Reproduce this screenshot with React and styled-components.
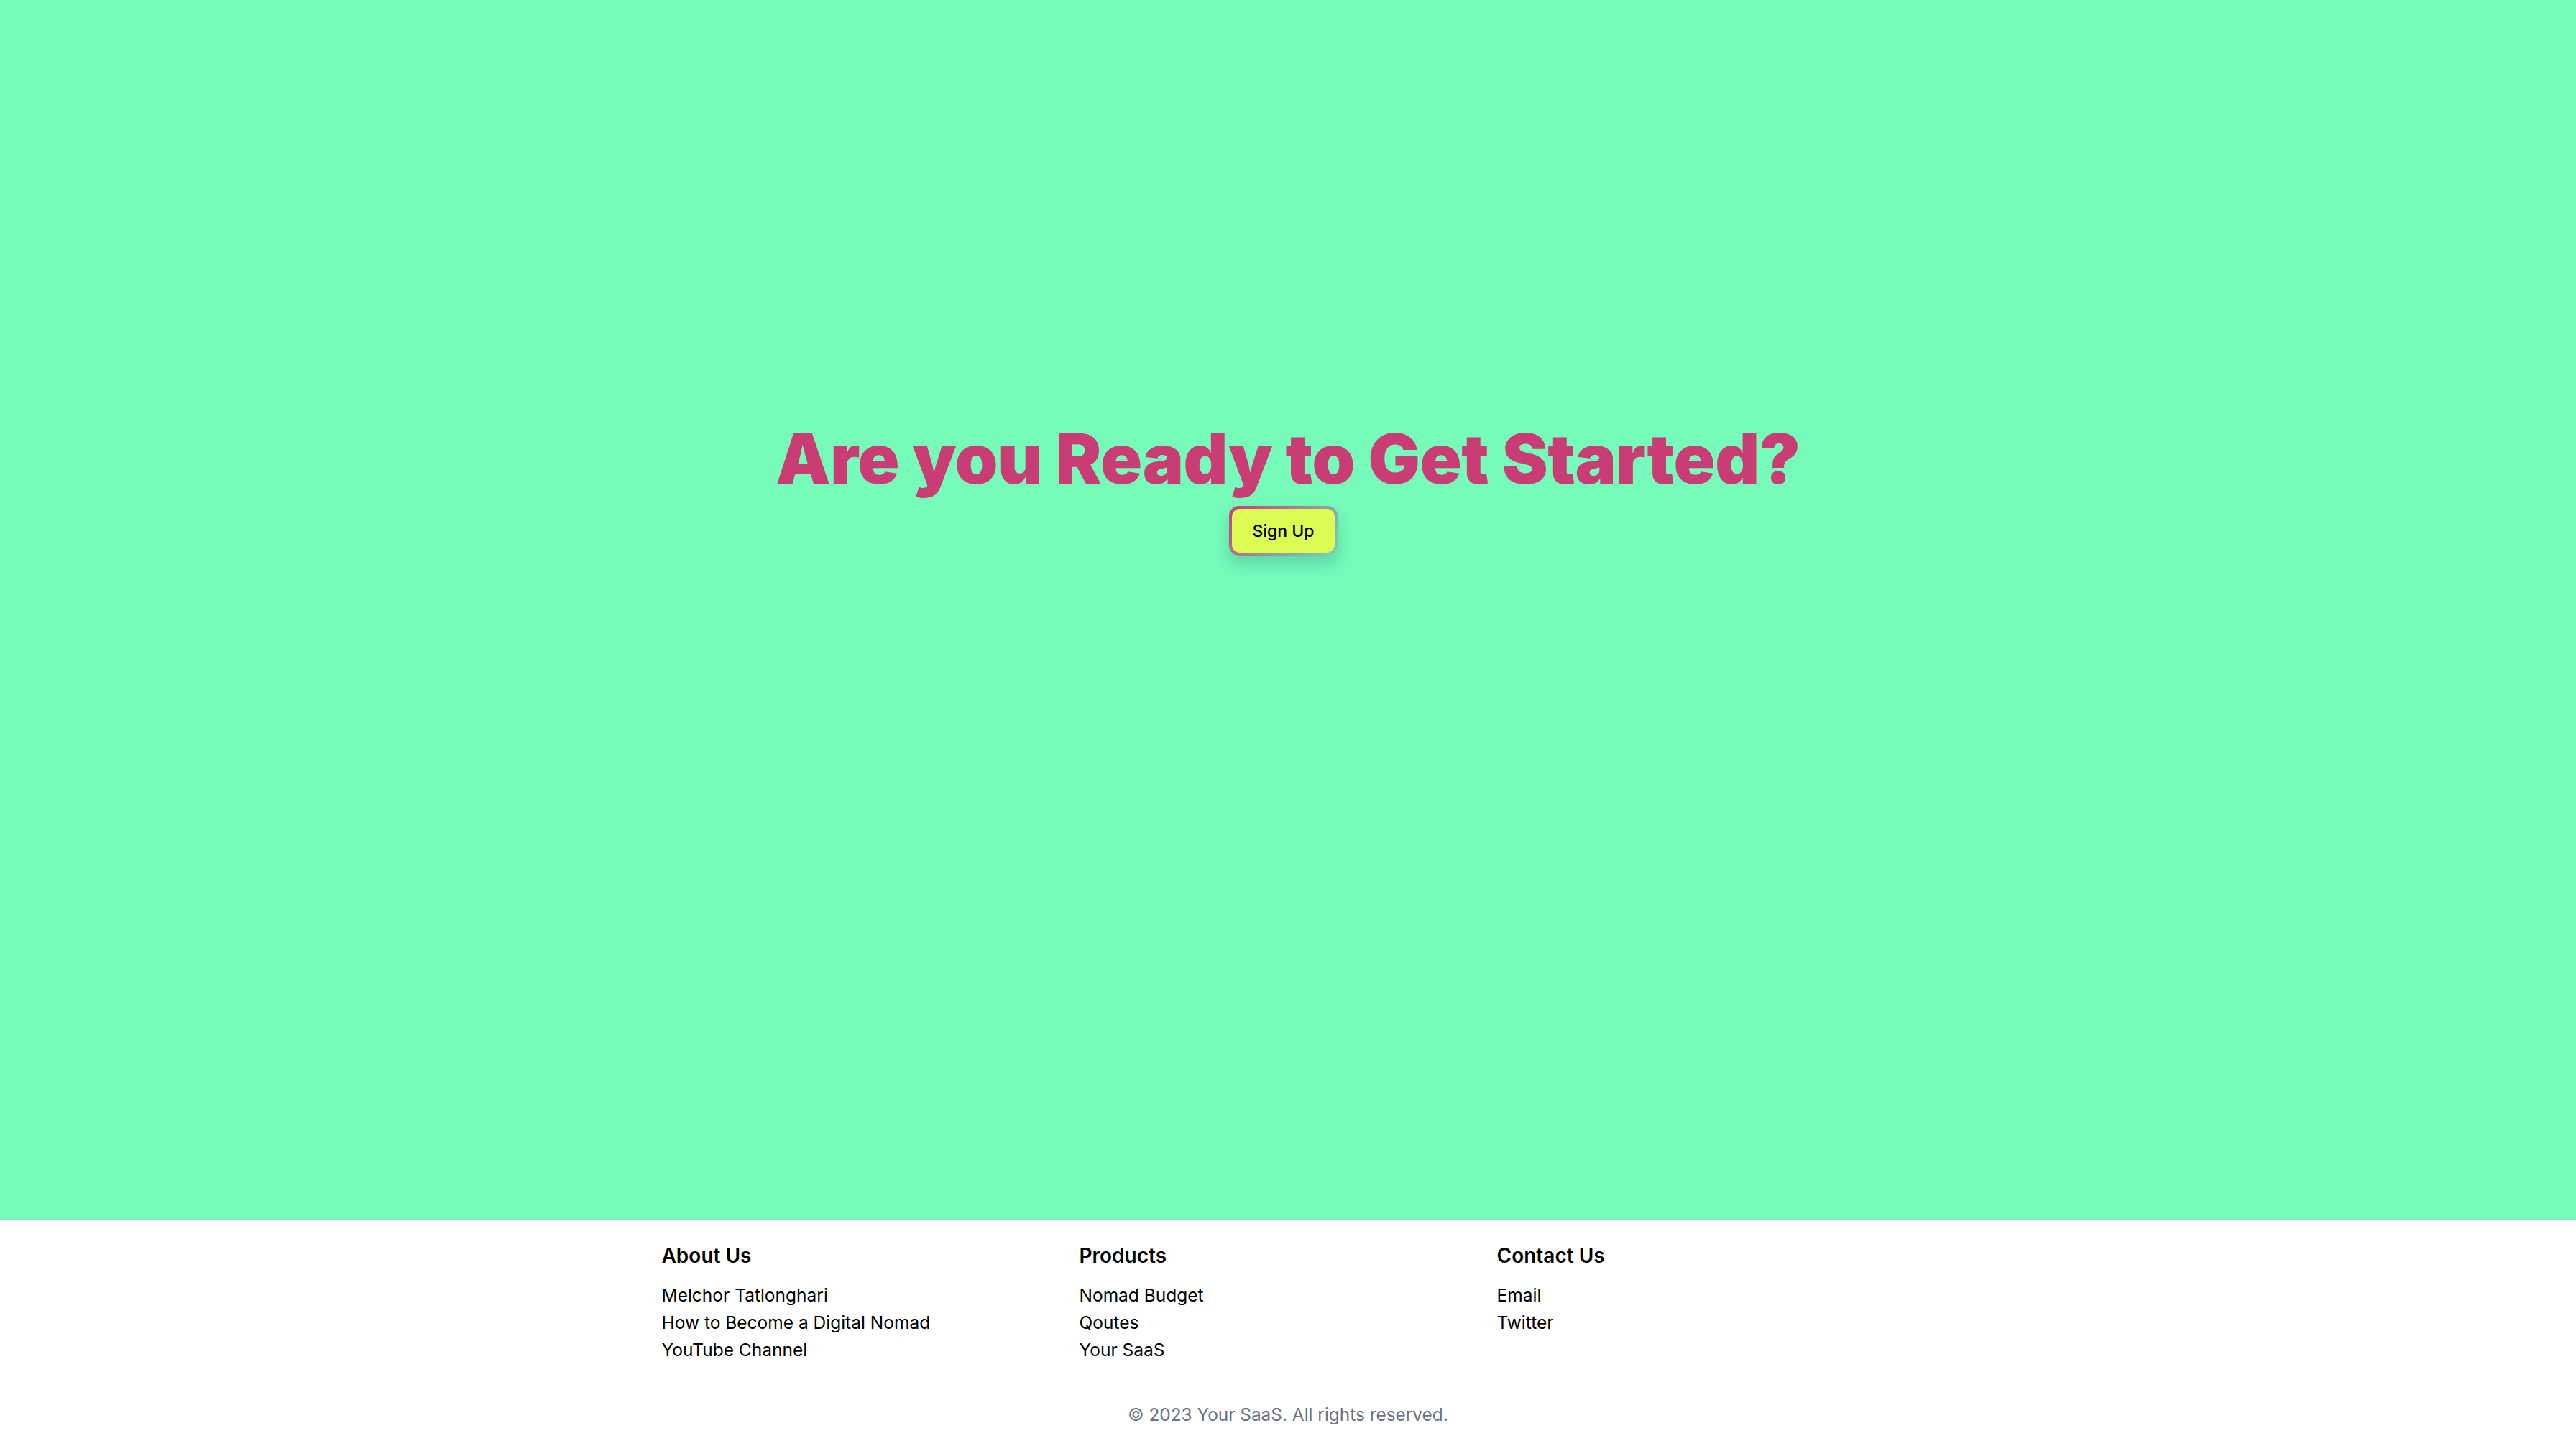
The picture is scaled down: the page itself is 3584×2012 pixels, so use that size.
import styled, { createGlobalStyle } from 'styled-components';

const GlobalStyle = createGlobalStyle`
  html, body {
    margin: 0;
    padding: 0;
  }
  body {
    font-family: Inter, "Liberation Sans", sans-serif;
    color: #000;
  }
  * { box-sizing: border-box; }
`;

const Page = styled.div`
  display: flex;
  flex-direction: column;
  min-height: 2012px;
`;

const Hero = styled.section`
  height: 1697px;
  background: #76fbbb;
  display: flex;
  flex-direction: column;
  align-items: center;
  padding-top: 590px;
`;

const Title = styled.h1`
  margin: 0;
  font-size: 96px;
  line-height: 96px;
  font-weight: 900;
  letter-spacing: -0.5px;
  color: #c93c74;
`;

const GradientBorder = styled.div`
  margin: 18px 13px 0 0;
  padding: 4px;
  border-radius: 14px;
  background: linear-gradient(135deg, #c93c74 0%, #a08aa0 50%, #6fd6b8 100%);
  box-shadow: 0 12px 22px rgba(40, 150, 120, 0.35);
`;

const Button = styled.button`
  display: block;
  width: 143px;
  height: 61px;
  border: none;
  border-radius: 11px;
  background: #dcfc54;
  font-family: Inter, "Liberation Sans", sans-serif;
  font-size: 23px;
  font-weight: 500;
  color: #000;
  cursor: pointer;
`;

const Footer = styled.footer`
  background: #fff;
  flex: 1;
  display: flex;
  flex-direction: column;
  align-items: center;
  padding: 30px 0 30px;
`;

const Columns = styled.div`
  width: 1743px;
  display: grid;
  grid-template-columns: repeat(3, 1fr);
`;

const Column = styled.div`
  display: flex;
  flex-direction: column;
`;

const Heading = styled.h3`
  margin: 0 0 16px;
  font-size: 28px;
  line-height: 40px;
  font-weight: 600;
`;

const LinkList = styled.ul`
  list-style: none;
  margin: 0;
  padding: 0;
`;

const LinkItem = styled.li`
  font-size: 24.5px;
  line-height: 38px;
  color: #000;
`;

const Copyright = styled.p`
  margin: 55px 0 0;
  font-size: 24.4px;
  line-height: 32px;
  color: #6b7280;
`;

const columns = [
  { title: 'About Us', links: ['Melchor Tatlonghari', 'How to Become a Digital Nomad', 'YouTube Channel'] },
  { title: 'Products', links: ['Nomad Budget', 'Qoutes', 'Your SaaS'] },
  { title: 'Contact Us', links: ['Email', 'Twitter'] },
];

export default function App() {
  return (
    <Page>
      <GlobalStyle />
      <Hero>
        <Title>Are you Ready to Get Started?</Title>
        <GradientBorder>
          <Button>Sign Up</Button>
        </GradientBorder>
      </Hero>
      <Footer>
        <Columns>
          {columns.map((col) => (
            <Column key={col.title}>
              <Heading>{col.title}</Heading>
              <LinkList>
                {col.links.map((l) => (
                  <LinkItem key={l}>{l}</LinkItem>
                ))}
              </LinkList>
            </Column>
          ))}
        </Columns>
        <Copyright>© 2023 Your SaaS. All rights reserved.</Copyright>
      </Footer>
    </Page>
  );
}
